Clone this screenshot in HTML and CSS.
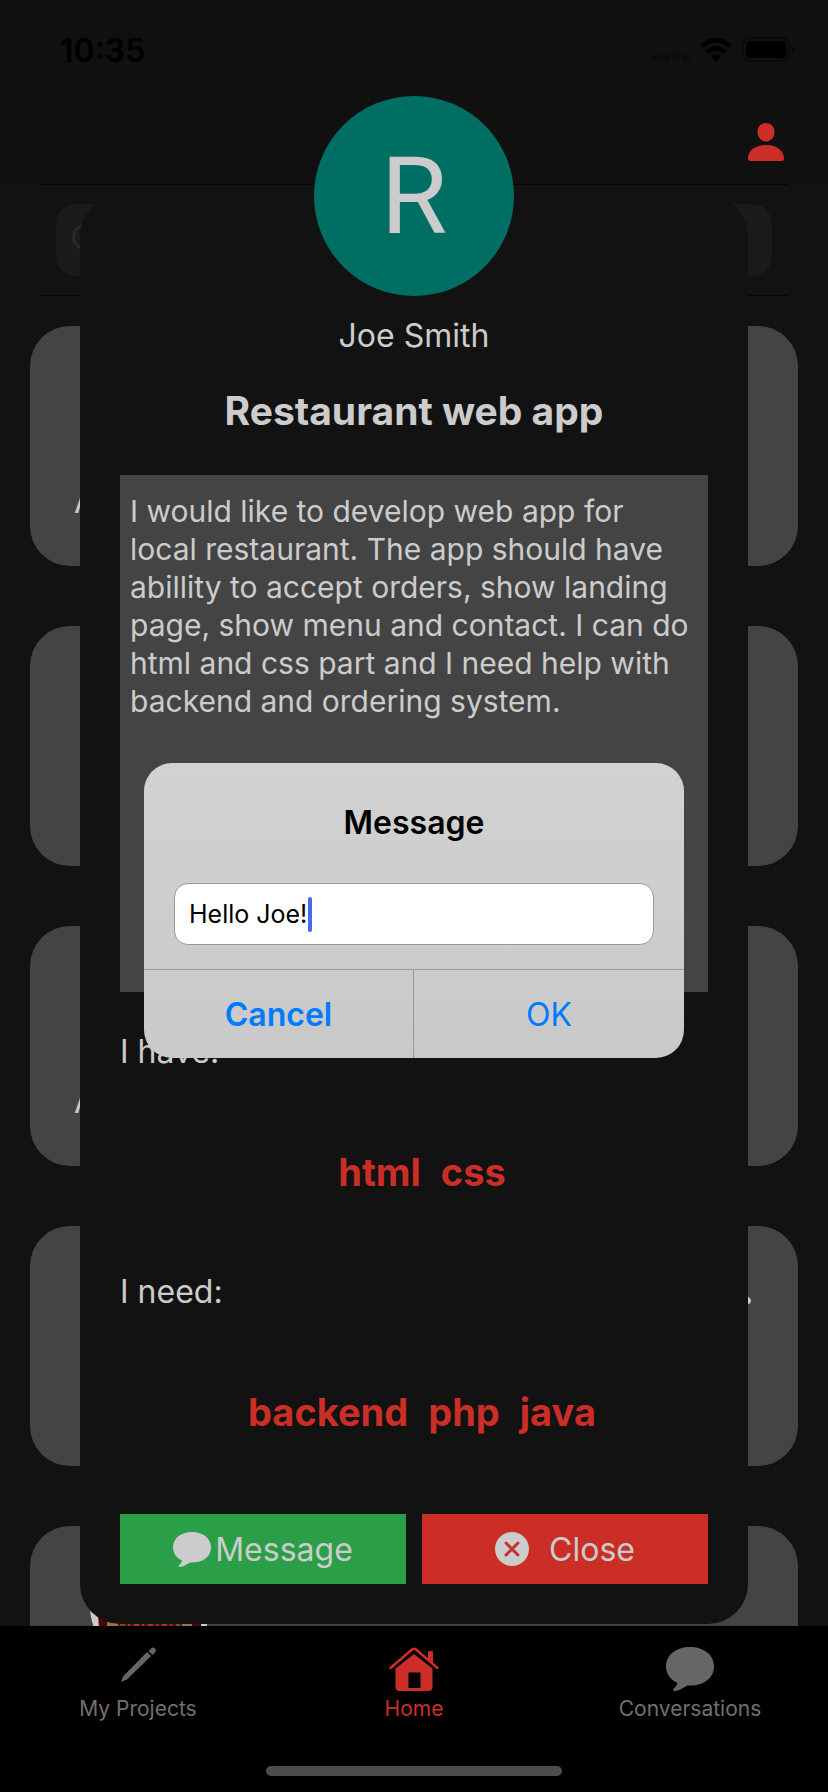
FILE: index.html
```html
<!DOCTYPE html>
<html lang="en">
<head>
<meta charset="utf-8">
<meta name="viewport" content="width=device-width, initial-scale=1">
<title>Restaurant web app</title>
<link rel="stylesheet" href="styles.css">
</head>
<body class="screen">
  <header class="topbar">
    <div class="status">
      <time class="clock">10:35</time>
      <div class="status-icons">
        <svg width="38" height="8" viewBox="0 0 38 8" fill="#0c0c0c"><rect width="8" height="7" rx="3"/><rect x="10" width="8" height="7" rx="3"/><rect x="20" width="8" height="7" rx="3"/><rect x="30" width="8" height="7" rx="3"/></svg>
        <svg width="32" height="24" viewBox="0 0 32 24" fill="none" stroke="#000" stroke-width="4.6"><path d="M2 8.2Q16-3.600 30 8.200"/><path d="M7.200 14.200Q16 6.400 24.800 14.200"/><path d="M16 24l-5-5.400q5-4 10 0z" fill="#000" stroke="none"/></svg>
        <svg width="54" height="26" viewBox="0 0 54 26"><rect x="1" y="1" width="46" height="23" rx="7" fill="none" stroke="#0a0a0a" stroke-width="2"/><rect x="4" y="4" width="40" height="17" rx="4"/><path d="M50 8.500q6 4 0 8z" fill="#0a0a0a"/></svg>
      </div>
    </div>
    <div class="nav">
      <button class="profile" type="button" aria-label="Profile">
        <svg width="36" height="38" viewBox="0 0 36 38" fill="currentColor"><path d="M18 0c5.500 0 8.500 4 8.500 9s-3.500 9.500-8.500 9.500S9.500 14 9.500 9 12.500 0 18 0z"/><path d="M0 35.500C0 28 7 22 18 22s18 6 18 13.500q0 2.500-2.500 2.500h-31Q0 38 0 35.500z"/></svg>
      </button>
    </div>
  </header>

  <main class="feed">
    <div class="search-row">
      <div class="search">
        <svg width="32" height="32" viewBox="0 0 32 32" fill="none" stroke="#29292b" stroke-width="3"><circle cx="13" cy="13" r="11.500"/><path d="M21 21l9 9"/></svg>
      </div>
    </div>
    <article class="card"><p class="card-author">A</p></article>
    <article class="card"></article>
    <article class="card"><p class="card-author">A</p></article>
    <article class="card"><h3 class="card-title">.</h3></article>
    <article class="card">
      <svg class="card-photo" width="120" height="120" viewBox="0 0 120 120">
        <defs><clipPath id="round"><circle cx="60" cy="60" r="60"/></clipPath></defs>
        <g clip-path="url(#round)"><rect width="120" height="120" fill="#ccc"/><path d="M7 56h104v64H12z" fill="#4d0303"/><path d="M17 66h85v54H17z" fill="#9c7347"/><path d="M28 66h64v54H28z" fill="#6e0d05"/><path d="M30 79h60" stroke="#8a4a12" stroke-width="3" stroke-dasharray="5 3 2 4"/></g>
      </svg>
    </article>
  </main>

  <nav class="tabs">
    <a class="tab" href="#projects">
      <svg width="48" height="44" viewBox="0 0 48 44" fill="currentColor"><path d="M33 5l4 4L13 32.500 7 35l2-5.500z"/><path d="M34.500 4L37 1.500q2-2 4 0t0 4L38.500 8z"/></svg>
      My Projects
    </a>
    <a class="tab tab-active" href="#home">
      <svg width="50" height="44" viewBox="0 0 50 44" fill="currentColor"><path d="M25 7l18.500 14.500V40q0 4-4 4h-29q-4 0-4-4V21.500zM19.500 25.500V41h12V25.500z" fill-rule="evenodd"/><path d="M1.500 21L23 2.500q2-1.500 4 0L48.500 21" fill="none" stroke="currentColor" stroke-width="2.600" stroke-linecap="round"/><path d="M39 13V5q0-1 1-1h3q1 0 1 1v12z"/></svg>
      Home
    </a>
    <a class="tab" href="#conversations">
      <svg width="48" height="44" viewBox="0 0 48 44" fill="currentColor"><path d="M24 0c14 0 24 8 24 19.500S38 38.500 24 38.500l-2.500 0C18 40.500 13 44 8.500 44q-2.500-.5-.5-2.500 3-3 3.500-5.500C4 32.500 0 26.500 0 19.500 0 8 10 0 24 0z"/></svg>
      Conversations
    </a>
  </nav>
  <div class="home-bar"></div>

  <section class="sheet" role="dialog" aria-label="Project details">
    <div class="avatar">R</div>
    <p class="owner">Joe Smith</p>
    <h1 class="title">Restaurant web app</h1>
    <p class="description">I would like to develop web app for local restaurant. The app should have abillity to accept orders, show landing page, show menu and contact. I can do html and css part and I need help with backend and ordering system.</p>
    <h2 class="label">I have:</h2>
    <div class="skills"><span>html</span><span>css</span></div>
    <h2 class="label">I need:</h2>
    <div class="skills"><span>backend</span><span>php</span><span>java</span></div>
    <div class="actions">
      <button class="action action-message" type="button">
        <svg width="38" height="35" viewBox="0 0 48 44" fill="currentColor"><path d="M24 0c14 0 24 8 24 19.500S38 38.500 24 38.500l-2.500 0C18 40.500 13 44 8.500 44q-2.500-.5-.5-2.500 3-3 3.500-5.500C4 32.500 0 26.500 0 19.500 0 8 10 0 24 0z"/></svg>
        Message
      </button>
      <button class="action action-close" type="button">
        <svg width="34" height="34" viewBox="0 0 34 34"><circle cx="17" cy="17" r="17" fill="currentColor"/><path d="M11 11l12 12M23 11L11 23" stroke="#cb2e27" stroke-width="3" stroke-linecap="round"/></svg>
        Close
      </button>
    </div>
  </section>

  <form class="alert" role="alertdialog" aria-labelledby="alert-title">
    <label class="alert-title" id="alert-title" for="message">Message</label>
    <div class="field">
      <input class="input" id="message" type="text" value="Hello Joe!">
      <span class="caret"></span>
    </div>
    <div class="alert-actions">
      <button class="alert-button alert-cancel" type="button">Cancel</button>
      <button class="alert-button" type="button">OK</button>
    </div>
  </form>
</body>
</html>
```

FILE: styles.css
```css
* {
  box-sizing: border-box;
}

body,
h1,
h2,
h3,
p {
  margin: 0;
}

button,
input {
  font: inherit;
  border: 0;
  border-radius: 0;
  padding: 0;
}

svg {
  display: block;
  flex: none;
}

.screen {
  position: relative;
  display: flex;
  flex-direction: column;
  height: 100vh;
  overflow: hidden;
  background: #121212;
  color: #ccc;
  font-family: Inter, "Liberation Sans", sans-serif;
  font-size: 32px;
}

.topbar {
  flex: none;
  background: #101010;
}

.status {
  display: flex;
  justify-content: space-between;
  align-items: center;
  height: 100px;
  padding: 0 32px 0 60px;
  color: #000;
}

.clock {
  font-weight: 600;
}

.status-icons {
  display: flex;
  align-items: center;
  gap: 10px;
}

.status-icons svg:first-child {
  margin-top: 16px;
}

.nav {
  display: flex;
  justify-content: flex-end;
  align-items: center;
  height: 84px;
  padding: 0 44px;
}

.profile {
  background: none;
  color: #cb2e27;
}

.feed {
  flex: 1;
  min-height: 0;
  overflow: hidden;
  padding: 0 30px;
}

.search-row {
  margin: 0 10px 30px;
  padding: 19px 16px;
  border-top: 1px solid #060606;
  border-bottom: 1px solid #060606;
}

.search {
  display: flex;
  align-items: center;
  height: 72px;
  padding: 0 16px;
  border-radius: 20px;
  background: #1b1b1d;
}

.card {
  position: relative;
  height: 240px;
  margin-bottom: 60px;
  padding: 32px 44px;
  border-radius: 40px;
  background: #444;
}

.card-author {
  padding-top: 124px;
  line-height: 40px;
}

.card-title {
  font-size: 40px;
  line-height: 64px;
  text-align: right;
}

.card-photo {
  position: absolute;
  top: 20px;
  left: 60px;
}

.tabs {
  flex: none;
  display: grid;
  grid-template-columns: repeat(3, 1fr);
  height: 166px;
  padding-top: 20px;
  border-top: 1px solid #000;
  background: #000;
}

.tab {
  display: flex;
  flex-direction: column;
  align-items: center;
  gap: 6px;
  color: #707070;
  font-size: 21px;
  line-height: 24px;
  text-decoration: none;
}

.tab svg {
  color: #666;
}

.tab-active,
.tab-active svg {
  color: #cb2e27;
}

.home-bar {
  position: absolute;
  bottom: 16px;
  left: 50%;
  width: 296px;
  height: 10px;
  margin-left: -148px;
  border-radius: 5px;
  background: #4d4d4d;
}

.sheet {
  position: absolute;
  top: 196px;
  left: 80px;
  right: 80px;
  padding: 0 40px 40px;
  border-radius: 40px;
  background: #121212;
}

.avatar {
  display: flex;
  justify-content: center;
  align-items: center;
  width: 200px;
  height: 200px;
  margin: -100px auto 0;
  border-radius: 50%;
  background: #006e62;
  font-family: Roboto, sans-serif;
  font-size: 108px;
  line-height: 108px;
}

.owner {
  padding: 20px 0;
  line-height: 40px;
  text-align: center;
}

.title {
  padding: 13px 0 42px;
  font-size: 39px;
  line-height: 44px;
  text-align: center;
}

.description {
  min-height: 517px;
  padding: 17px 10px;
  background: #444;
  font-size: 30px;
  line-height: 38px;
}

.label {
  padding: 40px 0;
  font-size: 32px;
  font-weight: 400;
  line-height: 40px;
}

.skills {
  display: flex;
  justify-content: center;
  gap: 20px;
  padding: 0 0 0 16px;
  color: #cb2e27;
  font-size: 38px;
  font-weight: 700;
  line-height: 120px;
}

.actions {
  display: grid;
  grid-template-columns: 1fr 1fr;
  gap: 16px;
  padding-top: 42px;
}

.action {
  display: flex;
  justify-content: center;
  align-items: center;
  height: 70px;
  color: #ccc;
}

.action-message {
  gap: 4px;
  background: #2b9f48;
}

.action-close {
  gap: 20px;
  background: #cb2e27;
}

.alert {
  position: absolute;
  top: 763px;
  left: 144px;
  right: 144px;
  overflow: hidden;
  border-radius: 28px;
  background: linear-gradient(#d2d2d2, #c9c9c9);
  color: #000;
}

.alert-title {
  display: block;
  padding: 40px 0;
  font-weight: 600;
  line-height: 40px;
  text-align: center;
}

.field {
  position: relative;
  margin: 0 30px 24px;
}

.input {
  display: block;
  width: 100%;
  height: 62px;
  padding: 0 14px;
  border: 1px solid #999;
  border-radius: 14px;
  background: #fff;
  color: #000;
  font-size: 25px;
}

.caret {
  position: absolute;
  top: 14px;
  left: 134px;
  width: 4px;
  height: 35px;
  border-radius: 2px;
  background: #446be8;
}

.alert-actions {
  display: grid;
  grid-template-columns: 1fr 1fr;
  border-top: 1px solid #999;
}

.alert-button {
  height: 88px;
  background: none;
  color: #007aff;
}

.alert-cancel {
  border-right: 1px solid #999;
  font-weight: 600;
}
```
